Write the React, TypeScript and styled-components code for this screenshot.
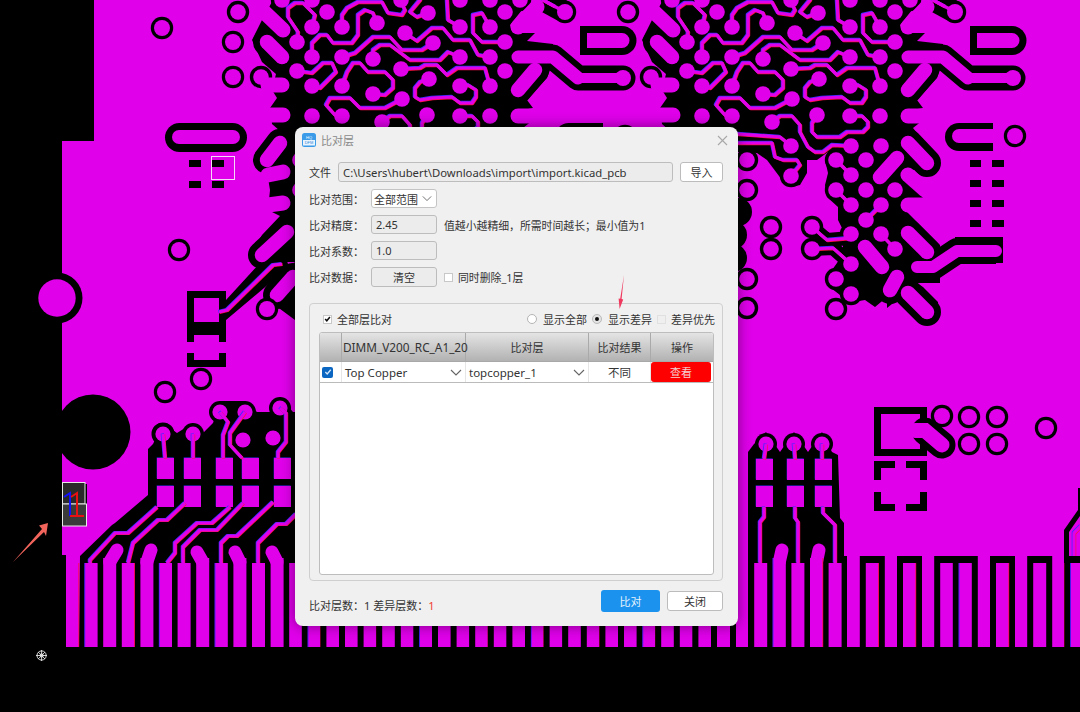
import React from "react";
import styled, { createGlobalStyle } from "styled-components";

const CU = "#e000ea";
const BK = "#000";

const GlobalStyle = createGlobalStyle`
  html, body { margin: 0; padding: 0; background: #000; }
  body { font-family: "Noto Sans", "Noto Sans CJK SC", sans-serif; }
`;

const Page = styled.div`
  position: relative;
  width: 1080px;
  height: 712px;
  overflow: hidden;
  background: #000;
`;

const BoardSvg = styled.svg`
  display: block;
`;

const ArrowSvg = styled.svg`
  position: absolute;
  left: 610px;
  top: 270px;
`;

const Dialog = styled.div`
  position: absolute;
  left: 295px;
  top: 127px;
  width: 443px;
  height: 499px;
  box-sizing: border-box;
  display: flex;
  flex-direction: column;
  background: #f0f0f0;
  border-radius: 8px;
  box-shadow: 0 0 14px rgba(0, 0, 0, 0.45);
  font-size: 11px;
  color: #333;
`;

const TitleBar = styled.div`
  height: 26px;
  padding: 0 10px 0 7px;
  display: flex;
  align-items: center;
  gap: 5px;
  color: #8a8a8a;
  font-size: 11px;
`;

const TitleText = styled.span`
  flex: 1;
`;

const Body = styled.div`
  flex: 1;
  padding: 9px 15px 0 14px;
  display: flex;
  flex-direction: column;
`;

const Form = styled.div`
  display: flex;
  flex-direction: column;
  gap: 7px;
`;

const Row = styled.div<{ $h?: number }>`
  height: ${(p) => p.$h || 19}px;
  display: flex;
  align-items: center;
`;

const Label = styled.span<{ $w?: number }>`
  width: ${(p) => p.$w || 62}px;
  flex: none;
`;

const Field = styled.div<{ $w?: number; $fill?: boolean }>`
  box-sizing: border-box;
  height: 100%;
  width: ${(p) => (p.$fill ? "auto" : `${p.$w || 66}px`)};
  flex: ${(p) => (p.$fill ? 1 : "none")};
  padding-left: 4px;
  display: flex;
  align-items: center;
  background: #ececec;
  border: 1px solid #bdbdbd;
  border-radius: 3px;
  font-size: ${(p) => (p.$fill ? "11.3px" : "11px")};
  white-space: nowrap;
`;

const SelectBox = styled.div`
  box-sizing: border-box;
  width: 66px;
  height: 100%;
  padding: 0 4px 0 2px;
  display: flex;
  align-items: center;
  justify-content: space-between;
  background: #fff;
  border: 1px solid #c4c4c4;
  border-radius: 3px;
`;

const PlainButton = styled.button<{ $w: number; $gray?: boolean; $ml?: number }>`
  box-sizing: border-box;
  width: ${(p) => p.$w}px;
  height: 100%;
  margin-left: ${(p) => p.$ml || 0}px;
  padding: 0;
  font: inherit;
  color: #333;
  background: ${(p) => (p.$gray ? "#ececec" : "#fff")};
  border: 1px solid #bcbcbc;
  border-radius: 3px;
`;

const Hint = styled.span`
  margin-left: 7px;
  font-size: 10.85px;
`;

const CheckLabel = styled.label`
  display: flex;
  align-items: center;
  gap: 5px;
`;

const Check = styled.span<{ $faded?: boolean }>`
  box-sizing: border-box;
  width: 9px;
  height: 9px;
  flex: none;
  display: flex;
  align-items: center;
  justify-content: center;
  background: ${(p) => (p.$faded ? "#efefef" : "#fff")};
  border: 1px solid ${(p) => (p.$faded ? "#e0e0e0" : "#c8c8c8")};
`;

const GroupBox = styled.div`
  box-sizing: border-box;
  height: 278px;
  margin-top: 16px;
  padding: 7px 8px 5px 9px;
  display: flex;
  flex-direction: column;
  gap: 5px;
  border: 1px solid #cfcfcf;
  border-radius: 4px;
`;

const Options = styled.div`
  height: 16px;
  display: flex;
  align-items: center;
  padding-left: 4px;
`;

const OptionSet = styled.div`
  margin-left: auto;
  margin-right: -1px;
  display: flex;
  align-items: center;
  gap: 5px;
`;

const Radio = styled.span<{ $on?: boolean }>`
  box-sizing: border-box;
  width: 10px;
  height: 10px;
  margin-right: 1px;
  border-radius: 50%;
  background: ${(p) => (p.$on ? "#111" : "#fff")};
  border: ${(p) => (p.$on ? "3px solid #e4e4e4" : "1px solid #b4b4b4")};
  outline: ${(p) => (p.$on ? "1px solid #bbb" : "none")};
  outline-offset: -1px;
`;

const Table = styled.div`
  flex: 1;
  overflow: hidden;
  background: #fff;
  border: 1px solid #bdbdbd;
  border-radius: 3px;
`;

const COLS = "22px 124px 123px 62px 1fr";

const HeadRow = styled.div`
  height: 29px;
  display: grid;
  grid-template-columns: ${COLS};
  background: linear-gradient(#e4e4e4, #b2b2b2);
  border-bottom: 1px solid #a8a8a8;
  box-sizing: border-box;
`;

const HeadCell = styled.div<{ $left?: boolean }>`
  display: flex;
  align-items: center;
  justify-content: ${(p) => (p.$left ? "flex-start" : "center")};
  padding-left: ${(p) => (p.$left ? "1px" : "0")};
  font-size: ${(p) => (p.$left ? "11.8px" : "11px")};
  border-right: 1px solid #aaa;
  white-space: nowrap;
  &:last-child { border-right: 0; }
`;

const DataRow = styled.div`
  height: 21px;
  box-sizing: border-box;
  display: grid;
  grid-template-columns: ${COLS};
  border-bottom: 1px solid #bbb;
`;

const DataCell = styled.div<{ $center?: boolean }>`
  display: flex;
  align-items: center;
  justify-content: ${(p) => (p.$center ? "center" : "space-between")};
  padding: ${(p) => (p.$center ? "0" : "0 3px")};
  font-size: 11.5px;
  border-right: 1px solid #e6e6e6;
  &:last-child { border-right: 0; }
`;

const CheckCell = styled(DataCell)`
  justify-content: flex-start;
  padding: 0 0 0 2px;
`;

const BlueCheck = styled.span`
  width: 11px;
  height: 11px;
  border-radius: 2px;
  background: #0b66c2;
  display: flex;
  align-items: center;
  justify-content: center;
`;

const ViewButton = styled.div`
  width: 60px;
  height: 20px;
  margin-right: 2px;
  display: flex;
  align-items: center;
  justify-content: center;
  background: #ff0000;
  border-radius: 3px;
  font-size: 11px;
  color: #f4d0d0;
`;

const Footer = styled.div`
  height: 22px;
  margin-top: 9px;
  display: flex;
  align-items: center;
`;

const Summary = styled.span`
  flex: 1;
  padding-top: 8px;
`;

const RedNum = styled.span`
  color: #f03c30;
`;

const PrimaryButton = styled.button`
  box-sizing: border-box;
  width: 59px;
  height: 22px;
  padding: 0;
  font: inherit;
  color: #e6f2fc;
  background: #1a92ee;
  border: 0;
  border-radius: 3px;
`;

const CloseButton = styled(PlainButton)`
  height: 20px;
  margin-left: 7px;
`;

const Chevron = ({ w = 12 }: { w?: number }) => (
  <svg width={w} height="7" viewBox="0 0 12 7" fill="none" stroke="#666" strokeWidth="1.1">
    <polyline points="1,1 6,6 11,1" />
  </svg>
);

const Tick = ({ color, s = 9, sw = 1.5 }: { color: string; s?: number; sw?: number }) => (
  <svg width={s} height={s} viewBox="0 0 9 9" fill="none" stroke={color} strokeWidth={sw}>
    <polyline points="1.5,4.5 3.6,6.8 7.6,2" />
  </svg>
);

type P = [number, number];
const pts = (a: P[]) => a.map((p) => p.join(",")).join(" ");

// one BGA fan-out; the second one on the board is the same drawing 390px to the right
const bgaOutline: P[] = [
  [273, 0], [530, 0], [510, 25], [513, 33], [535, 33], [527, 41], [553, 44], [553, 70], [550, 70],
  [547, 78], [527, 100], [533, 108], [523, 110], [533, 120], [523, 128], [527, 133], [548, 157],
  [548, 167], [537, 175], [530, 170], [513, 170], [533, 198], [513, 200], [513, 208], [550, 245],
  [550, 283], [527, 283], [533, 287], [548, 302], [548, 313], [533, 322], [507, 300], [497, 308],
  [497, 297], [485, 307], [475, 300], [457, 303], [450, 295], [437, 285], [437, 277], [447, 263],
  [453, 253], [453, 230], [448, 220], [448, 207], [437, 197], [435, 185], [438, 173], [435, 160],
  [438, 152], [427, 160], [417, 160], [417, 173], [410, 185], [401, 187], [392, 180], [377, 160],
  [367, 153], [348, 152], [330, 320], [295, 320], [268, 300], [270, 285], [295, 262], [263, 262],
  [253, 250], [262, 235], [280, 216], [268, 210], [270, 190], [268, 178], [262, 172], [253, 160],
  [262, 146], [280, 131], [272, 124], [270, 108], [277, 98], [272, 90], [276, 74], [262, 62],
  [252, 40], [262, 20],
];

const bgaVias: P[] = [
  [282, 0], [312, 0], [401, 0], [460, 0], [490, 0], [520, 0],
  [327, 12], [312, 27], [342, 27], [377, 23], [297, 42], [405, 33], [433, 43], [312, 57], [342, 57],
  [373, 59], [297, 71], [401, 69], [460, 27], [428, 13], [490, 27], [505, 12], [505, 42], [460, 57],
  [490, 57], [505, 71], [312, 86], [342, 86], [373, 94], [402, 99], [429, 79], [460, 86], [490, 86],
  [312, 116], [342, 116], [382, 122], [427, 115], [460, 116], [490, 116],
  [401, 146], [461, 146], [491, 146], [446, 160], [476, 160], [401, 176], [461, 175],
  [446, 190], [476, 190], [505, 190], [461, 205], [491, 205], [476, 220], [422, 227], [461, 234],
  [491, 234], [505, 249], [422, 249], [461, 264], [446, 279], [461, 294], [446, 309],
  [300, 160], [300, 190],
];

const bgaRingVias: P[] = [
  [238, 12], [261, 77], [357, 160], [357, 190], [357, 279], [357, 308], [381, 227], [381, 249],
];

const bgaTraces: P[][] = [
  [[297, 42], [298, 32], [288, 17], [288, 8], [295, 3], [303, 3], [315, 15], [312, 27]],
  [[342, 27], [342, 15], [347, 8], [358, 2], [382, 2], [388, 13], [402, 15], [405, 10], [400, 0]],
  [[377, 23], [373, 13], [365, 10], [358, 15], [358, 35], [352, 43], [333, 43], [327, 35], [320, 35], [312, 43], [312, 57]],
  [[342, 57], [355, 53], [373, 37], [390, 37], [402, 50], [422, 50], [433, 43]],
  [[373, 59], [373, 50], [380, 45], [390, 45], [410, 60], [440, 60], [448, 52], [460, 57]],
  [[405, 33], [417, 41], [432, 28], [443, 28], [453, 40], [470, 40], [478, 55], [490, 57]],
  [[460, 27], [448, 20], [447, 0]],
  [[428, 13], [417, 17], [410, 12], [420, 0]],
  [[490, 27], [482, 13], [473, 15], [473, 33], [482, 42], [505, 42]],
  [[297, 71], [312, 73], [323, 63], [332, 63], [336, 72], [320, 88], [312, 86]],
  [[342, 86], [347, 72], [353, 63], [360, 63], [368, 72], [385, 72], [393, 80], [393, 88], [385, 95], [373, 94]],
  [[401, 69], [420, 68], [425, 65], [437, 65], [447, 75], [457, 68], [485, 68], [490, 86]],
  [[429, 79], [420, 82], [415, 88], [415, 97], [420, 100], [432, 98], [452, 97], [460, 103], [472, 103], [476, 97], [476, 90], [468, 85], [460, 86]],
  [[402, 99], [385, 108], [360, 108], [350, 98], [330, 98], [326, 105], [335, 115], [342, 116]],
  [[382, 122], [390, 116], [402, 116], [410, 125], [410, 132], [418, 147], [425, 152], [433, 152], [442, 145], [461, 146]],
  [[427, 115], [422, 123], [422, 132], [427, 137], [450, 137], [457, 132], [473, 132], [478, 127], [478, 122], [472, 116], [460, 116]],
  [[348, 134], [390, 137], [401, 146]],
  [[348, 143], [382, 143], [385, 157], [393, 160], [407, 160], [410, 165], [401, 176]],
  [[446, 160], [461, 175]],
  [[446, 190], [461, 205]],
  [[491, 205], [476, 220]],
  [[491, 234], [505, 249]],
  [[422, 227], [437, 240], [461, 238], [461, 234]],
  [[422, 249], [443, 248], [461, 264]],
  [[543, 0], [565, 12]],
];

const capsules: [number, number, number, number][] = [
  [267, 42, 282, 57], [518, 90, 535, 70], [518, 143, 537, 163], [490, 177, 507, 158],
  [518, 233, 537, 252], [475, 247, 492, 267], [500, 290, 507, 277], [518, 293, 537, 312],
  [280, 143, 267, 160], [287, 232, 262, 255], [293, 277, 277, 295],
];

// stubs that grow out of the copper pour into the cleared area
const stubs: [number, number, number, number][] = [
  [262, 10, 283, 30], [518, 27, 537, 7], [268, 85, 282, 85], [268, 115, 283, 115],
  [518, 116, 540, 116], [518, 175, 535, 190], [518, 205, 535, 205],
  [268, 175, 283, 172], [268, 205, 283, 203],
];

const Bga = ({ dx }: { dx: number }) => (
  <g transform={`translate(${dx} 0)`}>
    <polygon points={pts(bgaOutline)} fill={BK} />
    {capsules.map((c, i) => (
      <line key={i} x1={c[0]} y1={c[1]} x2={c[2]} y2={c[3]} stroke={BK} strokeWidth="28" strokeLinecap="round" />
    ))}
    {[...bgaVias, ...bgaRingVias].map((v, i) => (
      <circle key={i} cx={v[0]} cy={v[1]} r="11.2" fill={BK} />
    ))}
    <polyline points="422,227 437,240 461,238" fill="none" stroke={BK} strokeWidth="14" />
    <polyline points="422,249 443,248 461,264" fill="none" stroke={BK} strokeWidth="14" />
    <polyline points="543,0 565,12" fill="none" stroke={BK} strokeWidth="22" />
    {/* long routed pour finger */}
    <polyline points="518,57 553,57 578,78 623,78" fill="none" stroke={BK} strokeWidth="25" strokeLinejoin="round" strokeLinecap="round" />
    <rect x="585" y="80" width="30" height="10" fill={BK} />
    {/* D shaped cut-out */}
    <path d="M580 26 H622 A14.5 14.5 0 0 1 622 55 H580 Z" fill={BK} />
    <path d="M587 33 H622 A7.5 7.5 0 0 1 622 48 H587 Z" fill={CU} />
    {/* lower routed finger */}
    <polyline points="527,267 543,267 567,251 606,251" fill="none" stroke={BK} strokeWidth="26" strokeLinejoin="round" />
    <rect x="565" y="237" width="48" height="26" fill={BK} />
    {/* pill with a via */}
    <rect x="555" y="123" width="48" height="28" rx="14" fill={BK} />
    <rect x="585" y="123" width="18" height="28" fill={BK} />
    <circle cx="625" cy="136" r="11.2" fill={BK} />
    <path d="M569 129 H607 V143 H569 A7 7 0 0 1 569 129 Z" fill={CU} />
    <circle cx="625" cy="136" r="8" fill={CU} />
    {/* pad grid */}
    {[160, 180, 200, 220].map((y) =>
      [580, 602].map((x) => <rect key={`${x}-${y}`} x={x} y={y} width={x === 580 ? 11 : 12} height="7" fill={BK} />)
    )}
    <polyline points="518,57 553,57 578,78" fill="none" stroke={CU} strokeWidth="13" strokeLinecap="round" strokeLinejoin="round" />
    <polyline points="578,78 623,78" fill="none" stroke={CU} strokeWidth="10" />
    <circle cx="623" cy="78" r="8" fill={CU} />
    <polyline points="527,267 543,267 567,251 606,251" fill="none" stroke={CU} strokeWidth="12" strokeLinecap="round" strokeLinejoin="round" />
    <rect x="597" y="245" width="9" height="12" fill={CU} />
    {/* traces: a blue and a red copy show the offset between both layers */}
    <g fill="none" strokeWidth="3.2" strokeLinejoin="round" strokeLinecap="round">
      <g stroke="#3a2cff" transform="translate(-0.7 -0.6)">
        {bgaTraces.map((t, i) => <polyline key={i} points={pts(t)} />)}
      </g>
      <g stroke="#ff1040" transform="translate(0.6 0.6)">
        {bgaTraces.map((t, i) => <polyline key={i} points={pts(t)} />)}
      </g>
      <g stroke={CU}>
        {bgaTraces.map((t, i) => <polyline key={i} points={pts(t)} />)}
      </g>
    </g>
    {capsules.map((c, i) => (
      <line key={i} x1={c[0]} y1={c[1]} x2={c[2]} y2={c[3]} stroke={CU} strokeWidth="14.5" strokeLinecap="round" />
    ))}
    {stubs.map((c, i) => (
      <line key={i} x1={c[0]} y1={c[1]} x2={c[2]} y2={c[3]} stroke={CU} strokeWidth="15" strokeLinecap="round" />
    ))}
    {[...bgaVias, ...bgaRingVias].map((v, i) => (
      <circle key={i} cx={v[0]} cy={v[1]} r={7.8} fill={CU} />
    ))}
    <circle cx="565" cy="12" r="11.2" fill={BK} />
    <circle cx="565" cy="12" r="8" fill={CU} />
    <line x1="543" y1="0" x2="565" y2="12" stroke={CU} strokeWidth="3.2" />
  </g>
);

const FINGER_X = (i: number) => 66 + 18.6 * i;

const connected = [0, 36, 42, 44, 46, 49, 51, 53];
const blobs: Record<number, P> = {
  2: [117, 550], 4: [151, 550], 7: [197, 552], 9: [235, 552], 11: [272, 552], 38: [782, 550], 40: [819, 550],
};
const redEdge = [0, 3, 13, 16, 22, 25, 28, 31, 40, 43, 45, 50, 53];
const blueEdge = [1, 5, 8, 13, 19, 25, 31, 38, 48, 54];

const Fingers = () => (
  <g>
    {Array.from({ length: 55 }, (_, i) => {
      const x = FINGER_X(i);
      const inBlack = i <= 12 || (i >= 37 && i <= 41);
      const isConn = connected.includes(i);
      const blob = blobs[i];
      const top = blob ? 558 : 563;
      return (
        <g key={i}>
          {!inBlack && !isConn && <rect x={x - 6} y="556" width="25" height="91" fill={BK} />}
          {!isConn || i === 0 ? <rect x={x} y={i === 0 ? 553 : top} width="13" height={i === 0 ? 94 : 647 - top} fill={CU} /> : null}
          {blob && (
            <polyline points={`${x + 6.5},562 ${blob[0]},${blob[1]}`} stroke={CU} strokeWidth="13" strokeLinecap="round" />
          )}
          {redEdge.includes(i) && <rect x={x + 12.4} y={top} width="0.8" height={647 - top} fill="#ff0a3c" />}
          {blueEdge.includes(i) && <rect x={x - 0.2} y={top} width="0.8" height={647 - top} fill="#3422ff" />}
        </g>
      );
    })}
  </g>
);

const leftTraces: P[][] = [
  [[90, 563], [90, 560], [115, 533], [128, 533], [157, 507]],
  [[128, 563], [132, 547], [133, 543], [158, 520], [167, 520], [185, 503]],
  [[167, 563], [175, 553], [175, 543], [197, 523], [212, 523], [230, 507]],
  [[183, 563], [183, 547], [200, 530], [217, 530], [243, 503]],
  [[221, 563], [221, 543], [228, 536], [237, 536], [273, 502]],
  [[258, 563], [258, 543], [277, 524], [286, 524], [296, 514]],
  [[163, 434], [165, 458]],
  [[193, 434], [193, 458]],
  [[220, 412], [228, 422], [223, 435], [223, 458]],
  [[245, 412], [230, 433], [230, 445], [242, 458]],
  [[280, 408], [286, 413], [286, 442], [278, 452], [278, 458]],
  [[764, 507], [764, 517], [760, 522], [760, 563]],
  [[795, 507], [795, 518], [798, 522], [798, 563]],
  [[823, 507], [823, 513], [835, 525], [835, 563]],
  [[766, 444], [764, 459]],
  [[794, 444], [795, 459]],
  [[822, 444], [822, 459]],
  [[1074, 563], [1074, 533], [1081, 526]],
  [[219, 312], [227, 310], [273, 265], [282, 264]],
];

const pads: P[] = [
  [157, 458], [157, 486], [184, 458], [184, 486], [216, 458], [216, 486], [242, 458], [242, 486], [274, 458], [274, 486],
  [756, 459], [756, 486], [787, 459], [787, 486], [815, 459], [815, 486],
];

const planeRings: P[] = [
  [179, 250], [267, 309], [201, 379], [165, 392], [162, 28], [233, 42], [233, 77],
  [969, 417], [997, 417], [969, 444], [997, 444], [1046, 428], [942, 416],
];

const edgeBlack: P[] = [[733, 235], [733, 258], [738, 212]];

const Bracket = ({ d }: { d: string }) => <path d={d} fill="none" stroke={BK} strokeWidth="7" />;

const Board = () => (
  <BoardSvg width="1080" height="712" viewBox="0 0 1080 712">
    <rect width="1080" height="712" fill={BK} />
    <polygon points="94,0 1080,0 1080,647 62,647 62,141 94,141" fill={CU} />
    <rect x="60" y="555" width="6" height="92" fill={BK} />

    {/* mounting hole and slots */}
    <circle cx="57" cy="298" r="25.5" fill={BK} />
    <circle cx="57" cy="298" r="18.7" fill={CU} />
    <circle cx="93" cy="432" r="37.5" fill={BK} />
    <rect x="165" y="123" width="82" height="29" rx="14.5" fill={BK} />
    <rect x="172" y="130" width="68" height="14" rx="7" fill={CU} />
    {[189, 212].map((x) =>
      [160, 181].map((y) => <rect key={`${x}-${y}`} x={x} y={y} width="12" height="7" fill={BK} />)
    )}

    {/* component outline on the left */}
    <rect x="187" y="291" width="39" height="51" fill={BK} />
    <rect x="187" y="353" width="39" height="14" fill={BK} />
    <rect x="194" y="298" width="25" height="24" fill={CU} />
    <rect x="194" y="335" width="25" height="25" fill={CU} />
    <polygon points="226,300 260,263 285,255 290,270 277,277 226,320" fill={BK} />

    <Bga dx={0} />
    <Bga dx={390} />
    {edgeBlack.map((c, i) => <circle key={i} cx={c[0]} cy={c[1]} r="14" fill={BK} />)}

    {/* cleared area around the left edge connector */}
    <polygon
      points="80,556 112,525 115,523 148,495 148,449 153,444 163,423 177,433 193,423 203,433 213,423 220,401 245,401 257,412 270,412 280,397 293,412 296,412 296,647 79,647"
      fill={BK}
    />
    <circle cx="163" cy="434" r="11.5" fill={BK} />
    {/* cleared area around the right connector block */}
    <polygon points="748,647 748,452 754,444 766,432 780,452 794,432 808,452 822,432 832,452 838,455 840,518 844,523 844,556 847,556 847,647" fill={BK} />

    {/* keepout near the right corner of the connector */}
    <polygon points="1078,488 1080,488 1080,516 1069,532 1069,647 1064,647 1064,530 1078,510" fill={BK} />

    {/* square pad with notch */}
    <rect x="874" y="407" width="53" height="49" fill={BK} />
    <rect x="881" y="414" width="39" height="35" fill={CU} />
    <polyline points="925,431 942,445" stroke={BK} strokeWidth="27" strokeLinecap="round" />
    <polyline points="915,430.5 925,430.5 942,445" fill="none" stroke={CU} strokeWidth="15" strokeLinecap="round" />
    <Bracket d="M895 464.5 H877.5 V480" />
    <Bracket d="M906 464.5 H923.5 V480" />
    <Bracket d="M877.5 492 V507.5 H895" />
    <Bracket d="M923.5 492 V507.5 H906" />

    {planeRings.map((c, i) => (
      <g key={i}>
        <circle cx={c[0]} cy={c[1]} r="11.2" fill={BK} />
        <circle cx={c[0]} cy={c[1]} r="8" fill={CU} />
      </g>
    ))}

    {/* vias above the connector pads */}
    {([[163, 434], [193, 434], [220, 412], [245, 412], [280, 408], [766, 444], [794, 444], [822, 444]] as P[]).map((c, i) => (
      <g key={i}>
        <circle cx={c[0]} cy={c[1]} r="11" fill={BK} />
        <circle cx={c[0]} cy={c[1]} r="7.6" fill={CU} />
      </g>
    ))}
    <circle cx="243" cy="440" r="7.6" fill={CU} />
    <circle cx="273" cy="438" r="7.6" fill={CU} />

    {pads.map((p, i) => (
      <g key={i}>
        <rect x={p[0] - 0.3} y={p[1] - 0.5} width="17" height="21" fill="#3a2cff" />
        <rect x={p[0]} y={p[1]} width="17" height="21" fill={CU} />
      </g>
    ))}

    <g fill="none" strokeWidth="3.2" strokeLinejoin="round">
      <g stroke="#3a2cff" transform="translate(-0.7 -0.5)">
        {leftTraces.map((t, i) => <polyline key={i} points={pts(t)} />)}
      </g>
      <g stroke="#ff1040" transform="translate(0.6 0.5)">
        {leftTraces.map((t, i) => <polyline key={i} points={pts(t)} />)}
      </g>
      <g stroke={CU}>
        {leftTraces.map((t, i) => <polyline key={i} points={pts(t)} />)}
      </g>
    </g>

    <Fingers />

    {/* the two selected text blocks */}
    <rect x="62" y="484" width="25" height="42" fill={BK} />
    <rect x="62.5" y="482.5" width="22.5" height="21.5" fill="#2a2a2a" stroke="#e8e8e8" strokeWidth="1" />
    <rect x="62.5" y="504" width="24" height="22" fill="#3a3a3a" stroke="#e8e8e8" strokeWidth="1" />
    <polyline points="64,497 70,493 70,516" fill="none" stroke="#1010ff" strokeWidth="2" />
    <polyline points="71,497 77,493 77,516 84,516" fill="none" stroke="#e81010" strokeWidth="2" />
    <line x1="70" y1="516" x2="77" y2="516" stroke="#e81010" strokeWidth="2" />
    <rect x="211.5" y="156.5" width="23" height="23" fill="none" stroke="#f4d8f6" strokeWidth="1" />

    {/* annotation arrow */}
    <polygon points="48,523 39,525.5 42,529 13,562 44,532 46,536" fill="#f2655c" />

    {/* origin marker */}
    <g stroke="#e8e8e8" fill="none" strokeWidth="0.9">
      <circle cx="41.6" cy="655.5" r="4.6" />
      <circle cx="41.6" cy="655.5" r="1.6" />
      <line x1="36" y1="655.5" x2="47" y2="655.5" />
      <line x1="41.6" y1="650" x2="41.6" y2="661" />
      <line x1="38.2" y1="652" x2="45" y2="659" />
      <line x1="45" y1="652" x2="38.2" y2="659" />
    </g>
  </BoardSvg>
);

const AppIcon = () => (
  <svg width="14" height="14" viewBox="0 0 14 14">
    <rect width="14" height="14" rx="2.5" fill="#3b9be8" />
    <text x="7" y="6" fontSize="4" textAnchor="middle" fill="#fff" fontFamily="Liberation Sans, sans-serif">HQ</text>
    <rect x="1" y="7" width="12" height="5.5" fill="#eaf4fd" />
    <text x="7" y="11.4" fontSize="4" textAnchor="middle" fill="#2f86d8" fontFamily="Liberation Sans, sans-serif">DFM</text>
  </svg>
);

export default function App() {
  return (
    <Page>
      <GlobalStyle />
      <Board />
      <Dialog>
        <TitleBar>
          <AppIcon />
          <TitleText>比对层</TitleText>
          <svg width="11" height="11" viewBox="0 0 11 11" stroke="#a8a8a8" strokeWidth="1.1">
            <line x1="1" y1="1" x2="10" y2="10" />
            <line x1="10" y1="1" x2="1" y2="10" />
          </svg>
        </TitleBar>
        <Body>
          <Form>
            <Row $h={20}>
              <Label $w={29}>文件</Label>
              <Field $fill>C:\Users\hubert\Downloads\import\import.kicad_pcb</Field>
              <PlainButton $w={43} $ml={7}>导入</PlainButton>
            </Row>
            <Row>
              <Label>比对范围：</Label>
              <SelectBox>
                全部范围
                <Chevron w={10} />
              </SelectBox>
            </Row>
            <Row>
              <Label>比对精度：</Label>
              <Field>2.45</Field>
              <Hint>值越小越精细，所需时间越长；最小值为1</Hint>
            </Row>
            <Row>
              <Label>比对系数：</Label>
              <Field>1.0</Field>
            </Row>
            <Row $h={20}>
              <Label>比对数据：</Label>
              <PlainButton $w={66} $gray>清空</PlainButton>
              <Hint>
                <CheckLabel>
                  <Check />
                  同时删除_1层
                </CheckLabel>
              </Hint>
            </Row>
          </Form>
          <GroupBox>
            <Options>
              <CheckLabel>
                <Check>
                  <Tick color="#111" s={8} sw={2} />
                </Check>
                全部层比对
              </CheckLabel>
              <OptionSet>
                <Radio />
                <span>显示全部</span>
                <Radio $on />
                <span>显示差异</span>
                <Check $faded />
                <span>差异优先</span>
              </OptionSet>
            </Options>
            <Table>
              <HeadRow>
                <HeadCell />
                <HeadCell $left>DIMM_V200_RC_A1_20</HeadCell>
                <HeadCell>比对层</HeadCell>
                <HeadCell>比对结果</HeadCell>
                <HeadCell>操作</HeadCell>
              </HeadRow>
              <DataRow>
                <CheckCell>
                  <BlueCheck>
                    <Tick color="#cfe4f8" s={8} />
                  </BlueCheck>
                </CheckCell>
                <DataCell>
                  Top Copper
                  <Chevron />
                </DataCell>
                <DataCell>
                  topcopper_1
                  <Chevron />
                </DataCell>
                <DataCell $center>不同</DataCell>
                <DataCell $center>
                  <ViewButton>查看</ViewButton>
                </DataCell>
              </DataRow>
            </Table>
          </GroupBox>
          <Footer>
            <Summary>
              比对层数：1 差异层数：<RedNum>1</RedNum>
            </Summary>
            <PrimaryButton>比对</PrimaryButton>
            <CloseButton $w={56}>关闭</CloseButton>
          </Footer>
        </Body>
      </Dialog>
      <ArrowSvg width="20" height="44" viewBox="0 0 20 44">
        <polygon points="14,5 11.6,29 13.2,29.5 9.6,39 8.6,28.6 10.2,28.8" fill="#f0395f" />
      </ArrowSvg>
    </Page>
  );
}
